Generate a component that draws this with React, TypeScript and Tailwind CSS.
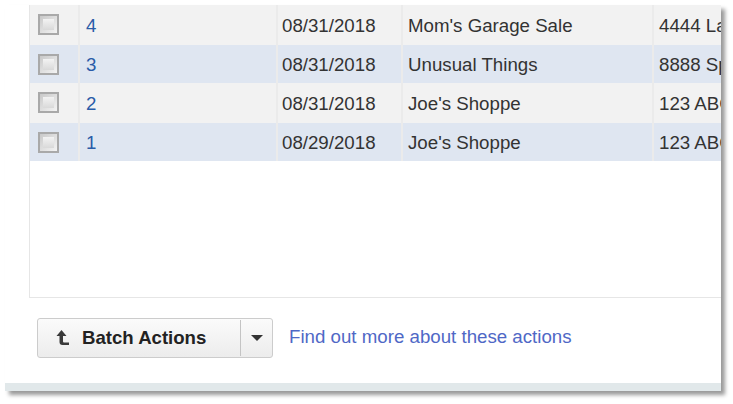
const rows = [
  { id: "4", date: "08/31/2018", name: "Mom's Garage Sale", address: "4444 Lake Rd", height: "h-[40px]", bg: "bg-[#f2f2f2]" },
  { id: "3", date: "08/31/2018", name: "Unusual Things", address: "8888 Spring St", height: "h-[38px]", bg: "bg-[#dfe6f1]" },
  { id: "2", date: "08/31/2018", name: "Joe's Shoppe", address: "123 ABC St", height: "h-[40px]", bg: "bg-[#f2f2f2]" },
  { id: "1", date: "08/29/2018", name: "Joe's Shoppe", address: "123 ABC St", height: "h-[38px]", bg: "bg-[#dfe6f1]" },
];

function Checkbox() {
  return (
    <div className="w-[21px] h-[21px] border-2 border-[#a9a9a9] bg-gradient-to-br from-[#c9c9c9] to-[#f4f4f4] p-[3px]">
      <div className="w-full h-full bg-gradient-to-b from-[#f3f3f3] to-[#d9d9d9]" />
    </div>
  );
}

function Row({ row }: { row: (typeof rows)[number] }) {
  return (
    <div className={`flex ${row.height} ${row.bg} text-[18.7px] text-[#333333]`}>
      <div className="w-[50px] shrink-0 pl-[8px] pt-[9px] border-r-2 border-[#ebebeb]">
        <Checkbox />
      </div>
      <div className="w-[198px] shrink-0 pl-[6px] pt-[2px] flex items-center text-[#2a5ca8] border-r-2 border-[#ebebeb]">{row.id}</div>
      <div className="w-[125px] shrink-0 pl-[4px] pt-[2px] flex items-center border-r-2 border-[#ebebeb]">{row.date}</div>
      <div className="w-[251px] shrink-0 pl-[5px] pt-[2px] flex items-center border-r-2 border-[#ebebeb]">{row.name}</div>
      <div className="flex-1 pl-[5px] pt-[2px] flex items-center whitespace-nowrap overflow-hidden">{row.address}</div>
    </div>
  );
}

export default function App() {
  return (
    <div className="w-[733px] h-[404px] bg-white pt-[5px] pl-[5px] font-['Liberation_Sans',Arial,sans-serif] overflow-hidden">
      <div className="w-[716px] h-[386px] bg-white flex flex-col shadow-[4px_4px_4px_rgba(0,0,0,0.4)]">
        <div className="h-[293px] ml-[24px] border-l border-b border-[#e6e6e6] overflow-hidden">
          {rows.map((row) => (
            <Row key={row.id} row={row} />
          ))}
        </div>
        <div className="flex items-center ml-[32px] mt-[20px] h-[40px]">
          <div className="flex w-[236px] h-[40px] rounded-[3px] border border-[#cccccc] bg-gradient-to-b from-[#fbfbfb] to-[#ececec]">
            <div className="flex-1 flex items-center pl-[17px] text-[18.6px] font-bold text-[#222222]">
              <svg width="16" height="18" viewBox="0 0 16 18" className="mr-[11px]">
                <path d="M6.5 1 L1.5 7 H4.5 V13 Q4.5 16 7.5 16 H14 V13.5 H9 Q8 13.5 8 12.5 V7 H11.5 Z" fill="#3a3a3a" />
              </svg>
              Batch Actions
            </div>
            <div className="w-[32px] my-[1px] border-l border-[#c4c4c4] flex items-center justify-center">
              <div className="w-0 h-0 border-l-[6px] border-r-[6px] border-t-[6px] border-l-transparent border-r-transparent border-t-[#333333]" />
            </div>
          </div>
          <a className="ml-[16px] mb-[2px] text-[18.7px] text-[#4f68c6]">Find out more about these actions</a>
        </div>
        <div className="mt-auto h-[8px] bg-[#e1e8ea]" />
      </div>
    </div>
  );
}
